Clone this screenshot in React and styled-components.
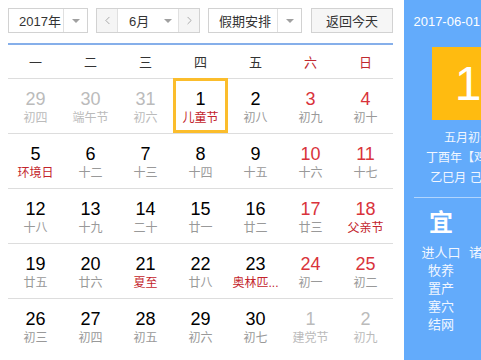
import styled, { createGlobalStyle } from "styled-components";
import { ChevronLeft, ChevronRight } from "lucide-react";

const GlobalStyle = createGlobalStyle`
  body {
    margin: 0;
    font-family: "Liberation Sans", Arial, "Noto Sans CJK SC", sans-serif;
    background: #fff;
  }
`;

const Page = styled.div`
  display: flex;
  width: 481px;
  height: 360px;
  overflow: hidden;
`;

const Main = styled.div`
  flex: none;
  width: 385px;
  padding: 8px 11px 0 8px;
`;

const Toolbar = styled.div`
  display: flex;
  gap: 8px;
  height: 25px;
  margin-bottom: 10px;
`;

const SelectBox = styled.div`
  display: flex;
  box-sizing: border-box;
  width: ${(p) => p.$w}px;
  height: 25px;
  border: 1px solid #d2d2d2;
  background: #fff;
  font-size: 13px;
  color: #333;
`;

const SelectText = styled.div`
  flex: 1;
  display: flex;
  align-items: center;
  padding-left: ${(p) => p.$pad || 10}px;
`;

const ArrowCell = styled.div`
  flex: none;
  width: ${(p) => p.$w || 23}px;
  display: flex;
  align-items: center;
  justify-content: center;
  border-left: ${(p) => (p.$noline ? "none" : "1px solid #e0e0e0")};
  &::after {
    content: "";
    border-left: 4px solid transparent;
    border-right: 4px solid transparent;
    border-top: 4px solid #a0a0a0;
  }
`;

const NavBtn = styled.div`
  flex: none;
  width: 20px;
  display: flex;
  align-items: center;
  justify-content: center;
  background: #f5f5f5;
  color: #8a8a8a;
  border-${(p) => p.$side}: 1px solid #e0e0e0;
`;

const TodayBtn = styled.div`
  box-sizing: border-box;
  width: 82px;
  height: 25px;
  margin-left: 1px;
  border: 1px solid #d2d2d2;
  background: #f6f6f6;
  display: flex;
  align-items: center;
  justify-content: center;
  font-size: 13px;
  color: #333;
`;

const WeekHead = styled.div`
  display: grid;
  grid-template-columns: repeat(7, 55px);
  height: 33px;
  border-top: 2px solid #86afea;
  border-bottom: 1px solid #ddd;
`;

const WeekDay = styled.div`
  display: flex;
  align-items: center;
  justify-content: center;
  font-size: 13px;
  color: ${(p) => (p.$weekend ? "#c0292f" : "#333")};
`;

const Row = styled.div`
  display: grid;
  grid-template-columns: repeat(7, 55px);
  height: 54px;
  border-bottom: ${(p) => (p.$last ? "none" : "1px solid #ddd")};
`;

const Cell = styled.div`
  position: relative;
  display: flex;
  flex-direction: column;
  align-items: center;
  padding-top: 10px;
  &::after {
    content: "";
    display: ${(p) => (p.$selected ? "block" : "none")};
    position: absolute;
    top: -1px;
    bottom: 0;
    left: 0;
    right: 0;
    border: 3px solid #fbbd2c;
  }
`;

const DayNum = styled.div`
  font-size: 18px;
  line-height: 20px;
  color: ${(p) => (p.$other ? "#bbb" : p.$weekend ? "#d9333b" : "#000")};
`;

const Lunar = styled.div`
  font-size: 12px;
  line-height: 18px;
  white-space: nowrap;
  color: ${(p) => (p.$other ? "#bbb" : p.$fest ? "#c3242b" : "#999")};
`;

const Side = styled.div`
  flex: none;
  width: 128px;
  height: 360px;
  background: #63abfb;
  color: #fff;
  display: flex;
  flex-direction: column;
  align-items: center;
`;

const SideDate = styled.div`
  margin-top: 12px;
  line-height: 20px;
  font-size: 13px;
  white-space: nowrap;
`;

const BigDay = styled.div`
  margin-top: 15px;
  width: 72px;
  height: 73px;
  background: #ffbb10;
  display: flex;
  align-items: center;
  justify-content: center;
  font-size: 48px;
  line-height: 73px;
`;

const LunarInfo = styled.div`
  margin-top: 8px;
  font-size: 12px;
  line-height: 20px;
  text-align: center;
  white-space: nowrap;
  color: #f2f7ff;
`;

const Divider = styled.div`
  align-self: stretch;
  margin: 9px 10px 0;
  height: 1px;
  background: rgba(255, 255, 255, 0.5);
`;

const YiJi = styled.div`
  align-self: stretch;
  display: grid;
  grid-template-columns: 1fr 1fr;
  padding: 0 10px;
`;

const YiCol = styled.div`
  display: flex;
  flex-direction: column;
  align-items: center;
  white-space: nowrap;
`;

const YiHead = styled.div`
  margin-top: 12px;
  font-size: 24px;
  font-weight: bold;
  line-height: 26px;
`;

const YiList = styled.div`
  margin-top: 8px;
  font-size: 13px;
  line-height: 18px;
  text-align: center;
  color: #f2f7ff;
`;

const weekdays = ["一", "二", "三", "四", "五", "六", "日"];

const d = (n, l, opts = {}) => ({ n, l, ...opts });

const weeks = [
  [
    d(29, "初四", { other: true }),
    d(30, "端午节", { other: true }),
    d(31, "初六", { other: true }),
    d(1, "儿童节", { fest: true, selected: true }),
    d(2, "初八"),
    d(3, "初九"),
    d(4, "初十"),
  ],
  [
    d(5, "环境日", { fest: true }),
    d(6, "十二"),
    d(7, "十三"),
    d(8, "十四"),
    d(9, "十五"),
    d(10, "十六"),
    d(11, "十七"),
  ],
  [
    d(12, "十八"),
    d(13, "十九"),
    d(14, "二十"),
    d(15, "廿一"),
    d(16, "廿二"),
    d(17, "廿三"),
    d(18, "父亲节", { fest: true }),
  ],
  [
    d(19, "廿五"),
    d(20, "廿六"),
    d(21, "夏至", { fest: true }),
    d(22, "廿八"),
    d(23, "奥林匹...", { fest: true }),
    d(24, "初一"),
    d(25, "初二"),
  ],
  [
    d(26, "初三"),
    d(27, "初四"),
    d(28, "初五"),
    d(29, "初六"),
    d(30, "初七"),
    d(1, "建党节", { other: true }),
    d(2, "初九", { other: true }),
  ],
];

export default function App() {
  return (
    <>
      <GlobalStyle />
      <Page>
        <Main>
          <Toolbar>
            <SelectBox $w={80}>
              <SelectText>2017年</SelectText>
              <ArrowCell />
            </SelectBox>
            <SelectBox $w={104}>
              <NavBtn $side="right">
                <ChevronLeft size={13} strokeWidth={1.3} />
              </NavBtn>
              <SelectText $pad={11}>6月</SelectText>
              <ArrowCell $noline $w={20} />
              <NavBtn $side="left">
                <ChevronRight size={13} strokeWidth={1.3} />
              </NavBtn>
            </SelectBox>
            <SelectBox $w={94}>
              <SelectText>假期安排</SelectText>
              <ArrowCell />
            </SelectBox>
            <TodayBtn>返回今天</TodayBtn>
          </Toolbar>

          <WeekHead>
            {weekdays.map((w, i) => (
              <WeekDay key={w} $weekend={i > 4}>
                {w}
              </WeekDay>
            ))}
          </WeekHead>

          {weeks.map((week, wi) => (
            <Row key={wi} $last={wi === weeks.length - 1}>
              {week.map((day, di) => (
                <Cell key={di} $selected={day.selected}>
                  <DayNum $other={day.other} $weekend={di > 4}>
                    {day.n}
                  </DayNum>
                  <Lunar $other={day.other} $fest={day.fest}>
                    {day.l}
                  </Lunar>
                </Cell>
              ))}
            </Row>
          ))}
        </Main>

        <Side>
          <SideDate>2017-06-01 星期四</SideDate>
          <BigDay>1</BigDay>
          <LunarInfo>
            五月初七
            <br />
            丁酉年【鸡年】
            <br />
            乙巳月 己未日
          </LunarInfo>
          <Divider />
          <YiJi>
            <YiCol>
              <YiHead>宜</YiHead>
              <YiList>
                进人口
                <br />
                牧养
                <br />
                置产
                <br />
                塞穴
                <br />
                结网
              </YiList>
            </YiCol>
            <YiCol>
              <YiHead>忌</YiHead>
              <YiList>诸事不宜</YiList>
            </YiCol>
          </YiJi>
        </Side>
      </Page>
    </>
  );
}
